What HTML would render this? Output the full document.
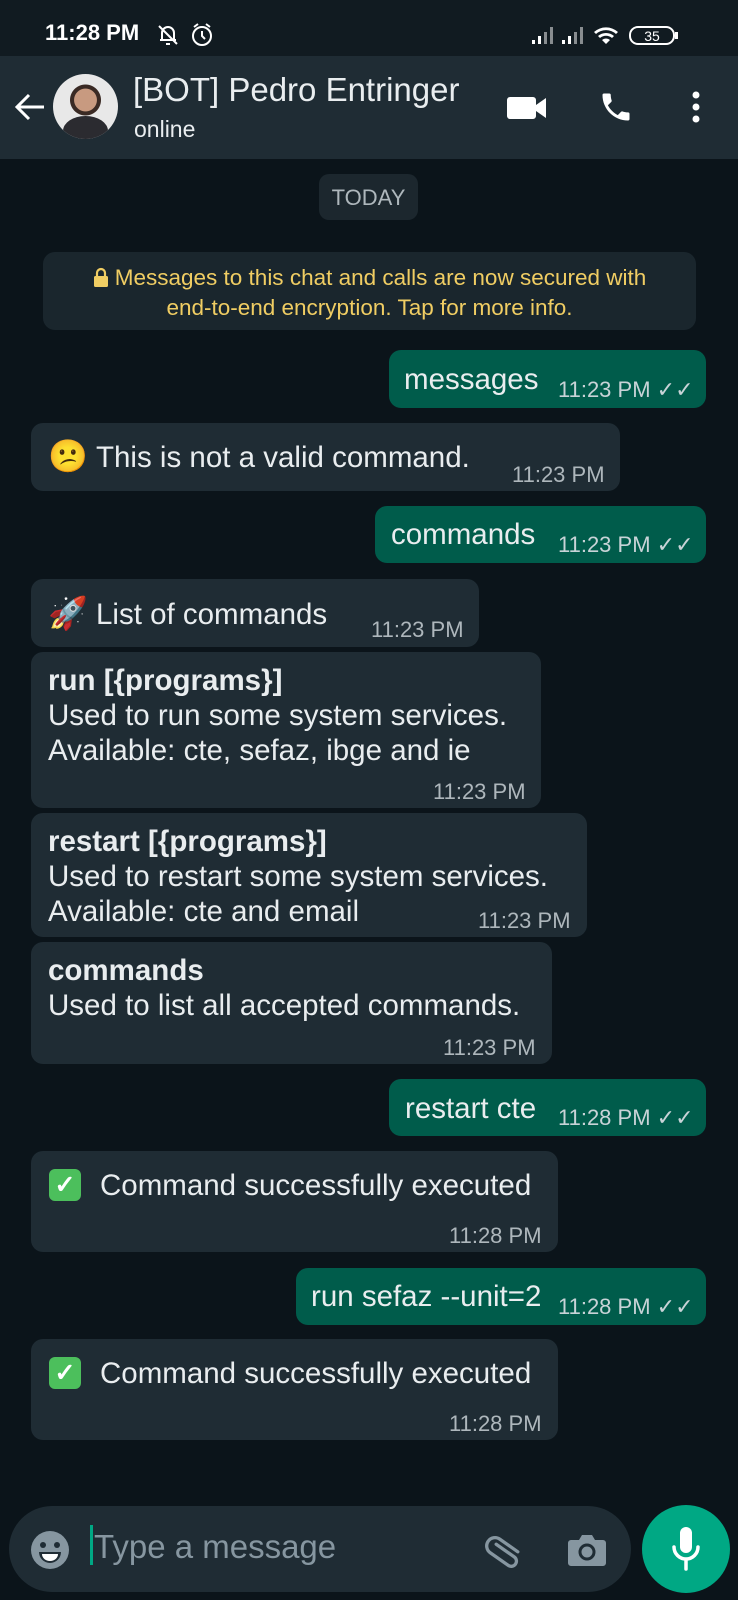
<!DOCTYPE html>
<html><head><meta charset="utf-8">
<style>
*{margin:0;padding:0;box-sizing:border-box}
body{width:738px;height:1600px;background:#0b141a;font-family:"Liberation Sans",sans-serif;position:relative;overflow:hidden;color:#e9edef}
.a{position:absolute}
.b{position:absolute;border-radius:12px;background:#1f2c34}
.o{background:#005c4b}
.t{position:absolute;font-size:29.5px;line-height:35px;white-space:nowrap;color:#e9edef}
.tm{position:absolute;font-size:22px;color:#aeb7bc;white-space:nowrap}
.tk{position:absolute;font-size:22px;color:#c8d3d7;white-space:nowrap}
.em{display:inline-block;width:48px;font-size:32px}
b{font-weight:bold}
</style></head><body>
<!-- status bar -->
<div class="a" style="left:0;top:0;width:738px;height:56px;background:#111b21"></div>
<div class="a" style="left:45px;top:20px;font-size:22px;font-weight:bold;color:#fff">11:28 PM</div>
<svg class="a" style="left:156px;top:22px" width="58" height="26" viewBox="0 0 58 26" fill="none" stroke="#fff" stroke-width="2"><path d="M4 18h16M6 18v-7a6 6 0 0 1 12 0v7M10 22h4M3 4l18 18"/><circle cx="46" cy="14" r="9"/><path d="M46 9v5l3 3M38 5l4-3M54 5l-4-3"/></svg>
<svg class="a" style="left:532px;top:24px" width="155" height="22" viewBox="0 0 155 22" fill="#fff"><rect x="0" y="16" width="3" height="4"/><rect x="6" y="12" width="3" height="8"/><rect x="12" y="8" width="3" height="12" opacity=".5"/><rect x="18" y="3" width="3" height="17" opacity=".5"/><rect x="30" y="16" width="3" height="4"/><rect x="36" y="12" width="3" height="8"/><rect x="42" y="8" width="3" height="12" opacity=".5"/><rect x="48" y="3" width="3" height="17" opacity=".5"/><path d="M62 8a18 18 0 0 1 24 0l-2 2a15 15 0 0 0-20 0zM66 12a12 12 0 0 1 16 0l-2 2a9 9 0 0 0-12 0zM70 16a6 6 0 0 1 8 0l-4 4z"/><rect x="98" y="3" width="44" height="17" rx="8" fill="none" stroke="#fff" stroke-width="2"/><rect x="143" y="8" width="3" height="7"/><text x="120" y="17" font-size="14" font-family="Liberation Sans" text-anchor="middle">35</text></svg>
<!-- header -->
<div class="a" style="left:0;top:56px;width:738px;height:103px;background:#1f2c34"></div>
<svg class="a" style="left:14px;top:92px" width="32" height="30" viewBox="0 0 32 30" fill="none" stroke="#fff" stroke-width="3"><path d="M30 15H4M15 3L3 15l12 12"/></svg>
<div class="a" style="left:53px;top:74px;width:65px;height:65px;border-radius:50%;background:radial-gradient(circle at 50% 40%,#c89a80 0 22%,#3a2a24 23% 30%,#e8e8e8 31%);overflow:hidden"><div class="a" style="left:10px;top:42px;width:45px;height:30px;border-radius:50% 50% 0 0;background:#2b2b30"></div></div>
<div class="a" style="left:133px;top:71px;font-size:33px;color:#e9edef">[BOT] Pedro Entringer</div>
<div class="a" style="left:134px;top:116px;font-size:23px;color:#e9edef">online</div>
<svg class="a" style="left:507px;top:95px" width="40" height="26" viewBox="0 0 40 26" fill="#fff"><rect x="0" y="2" width="29" height="22" rx="3"/><path d="M29 10l10-7v20l-10-7z"/></svg>
<svg class="a" style="left:598px;top:89px" width="36" height="36" viewBox="0 0 24 24" fill="#fff"><path d="M6.6 10.8c1.4 2.8 3.8 5.1 6.6 6.6l2.2-2.2c.3-.3.7-.4 1-.2 1.1.4 2.3.6 3.6.6.6 0 1 .4 1 1V20c0 .6-.4 1-1 1C10.6 21 3 13.4 3 4c0-.6.4-1 1-1h3.5c.6 0 1 .4 1 1 0 1.3.2 2.5.6 3.6.1.3 0 .7-.2 1z"/></svg>
<svg class="a" style="left:690px;top:91px" width="12" height="32" viewBox="0 0 12 32" fill="#fff"><circle cx="6" cy="4" r="3.5"/><circle cx="6" cy="16" r="3.5"/><circle cx="6" cy="28" r="3.5"/></svg>
<!-- today -->
<div class="b" style="left:319px;top:174px;width:99px;height:46px;background:#1c272e;border-radius:10px"></div>
<div class="a" style="left:319px;top:185px;width:99px;text-align:center;font-size:22px;color:#aeb7bc">TODAY</div>
<!-- encryption -->
<div class="b" style="left:43px;top:252px;width:653px;height:78px;background:#1a262d"></div>
<div class="a" style="left:43px;top:263px;width:653px;text-align:center;font-size:22.5px;line-height:30px;color:#f0cd63"><svg width="16" height="20" viewBox="0 0 16 20" style="vertical-align:-2px;margin-right:6px"><path d="M4 9V6a4 4 0 0 1 8 0v3" fill="none" stroke="#f0cd63" stroke-width="2.2"/><rect x="1" y="9" width="14" height="11" rx="1.5" fill="#f0cd63"/></svg>Messages to this chat and calls are now secured with<br>end-to-end encryption. Tap for more info.</div>
<!-- messages -->
<div class="b o" style="left:389px;top:350px;width:317px;height:58px"></div>
<div class="t" style="left:404px;top:362px">messages</div><div class="tk" style="left:558px;top:377px">11:23 PM ✓✓</div>

<div class="b" style="left:31px;top:423px;width:589px;height:68px"></div>
<div class="t" style="left:48px;top:439px"><span class="em" style="color:#f6c644">😕</span>This is not a valid command.</div><div class="tm" style="left:512px;top:462px">11:23 PM</div>

<div class="b o" style="left:375px;top:506px;width:331px;height:57px"></div>
<div class="t" style="left:391px;top:517px">commands</div><div class="tk" style="left:558px;top:532px">11:23 PM ✓✓</div>

<div class="b" style="left:31px;top:579px;width:448px;height:68px"></div>
<div class="t" style="left:48px;top:596px"><span class="em" style="color:#8fa8e8">🚀</span>List of commands</div><div class="tm" style="left:371px;top:617px">11:23 PM</div>

<div class="b" style="left:31px;top:652px;width:510px;height:156px"></div>
<div class="t" style="left:48px;top:663px"><b>run [{programs}]</b><br>Used to run some system services.<br>Available: cte, sefaz, ibge and ie</div><div class="tm" style="left:433px;top:779px">11:23 PM</div>

<div class="b" style="left:31px;top:813px;width:556px;height:124px"></div>
<div class="t" style="left:48px;top:824px"><b>restart [{programs}]</b><br>Used to restart some system services.<br>Available: cte and email</div><div class="tm" style="left:478px;top:908px">11:23 PM</div>

<div class="b" style="left:31px;top:942px;width:521px;height:122px"></div>
<div class="t" style="left:48px;top:953px"><b>commands</b><br>Used to list all accepted commands.</div><div class="tm" style="left:443px;top:1035px">11:23 PM</div>

<div class="b o" style="left:389px;top:1079px;width:317px;height:57px"></div>
<div class="t" style="left:405px;top:1091px">restart cte</div><div class="tk" style="left:558px;top:1105px">11:28 PM ✓✓</div>

<div class="b" style="left:31px;top:1151px;width:527px;height:101px"></div>
<div class="a" style="left:49px;top:1169px;width:32px;height:32px;border-radius:6px;background:#4cbf5c;color:#fff;font-size:25px;text-align:center;line-height:32px;font-weight:bold">✓</div>
<div class="t" style="left:100px;top:1168px">Command successfully executed</div><div class="tm" style="left:449px;top:1223px">11:28 PM</div>

<div class="b o" style="left:296px;top:1268px;width:410px;height:57px"></div>
<div class="t" style="left:311px;top:1279px">run sefaz --unit=2</div><div class="tk" style="left:558px;top:1294px">11:28 PM ✓✓</div>

<div class="b" style="left:31px;top:1339px;width:527px;height:101px"></div>
<div class="a" style="left:49px;top:1357px;width:32px;height:32px;border-radius:6px;background:#4cbf5c;color:#fff;font-size:25px;text-align:center;line-height:32px;font-weight:bold">✓</div>
<div class="t" style="left:100px;top:1356px">Command successfully executed</div><div class="tm" style="left:449px;top:1411px">11:28 PM</div>

<!-- input -->
<div class="a" style="left:9px;top:1506px;width:622px;height:86px;border-radius:43px;background:#1f2c34"></div>
<svg class="a" style="left:30px;top:1530px" width="40" height="40" viewBox="0 0 40 40"><circle cx="20" cy="20" r="19" fill="#8696a0"/><circle cx="13" cy="15" r="3" fill="#1f2c34"/><circle cx="27" cy="15" r="3" fill="#1f2c34"/><path d="M9 22h22a11 11 0 0 1-22 0z" fill="#1f2c34"/><path d="M12 24h16a8 7 0 0 1-16 0z" fill="#fff"/></svg>
<div class="a" style="left:90px;top:1525px;width:3px;height:40px;background:#00a884"></div>
<div class="a" style="left:94px;top:1528px;font-size:33px;color:#8696a0">Type a message</div>
<svg class="a" style="left:483px;top:1530px" width="44" height="44" viewBox="0 0 24 24" fill="none" stroke="#8696a0" stroke-width="1.8" stroke-linecap="round"><path d="M8 7l8.5 8.5a2.8 2.8 0 0 1-4 4L4 11a4.5 4.5 0 0 1 6.4-6.4l8.5 8.5M10.5 9.5l6 6" transform="rotate(-10 12 12)"/></svg>
<svg class="a" style="left:567px;top:1532px" width="40" height="36" viewBox="0 0 40 36"><path d="M4 8h8l3-5h10l3 5h8a3 3 0 0 1 3 3v20a3 3 0 0 1-3 3H4a3 3 0 0 1-3-3V11a3 3 0 0 1 3-3z" fill="#8696a0"/><circle cx="20" cy="20" r="7" fill="none" stroke="#1f2c34" stroke-width="3"/></svg>
<div class="a" style="left:642px;top:1505px;width:88px;height:88px;border-radius:50%;background:#00a884"></div>
<svg class="a" style="left:670px;top:1525px" width="32" height="46" viewBox="0 0 32 46" fill="none" stroke="#fff" stroke-width="3.5" stroke-linecap="round"><rect x="10" y="2" width="12" height="26" rx="6" fill="#fff" stroke="none"/><path d="M4 22a12 12 0 0 0 24 0M16 34v10"/></svg>
</body></html>
